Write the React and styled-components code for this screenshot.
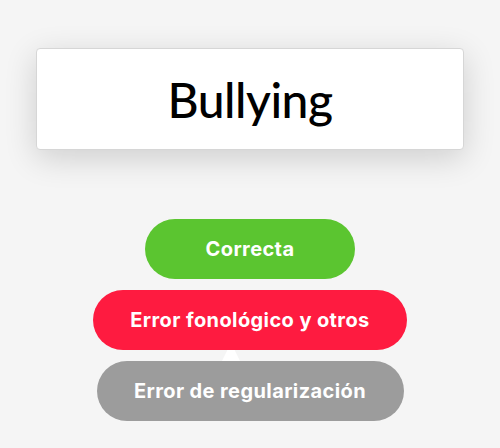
import React from "react";
import styled, { createGlobalStyle } from "styled-components";

const GlobalStyle = createGlobalStyle`
  html, body {
    margin: 0;
    padding: 0;
    background: #f5f5f5;
  }
`;

const options = [
  { label: "Correcta", color: "#5bc530", width: 210 },
  { label: "Error fonológico y otros", color: "#fe1b40", width: 314 },
  { label: "Error de regularización", color: "#9c9c9c", width: 307 },
];

export default function App() {
  return (
    <>
      <GlobalStyle />
      <Page>
        <WordCard>
          <Word>Bullying</Word>
        </WordCard>
        <OptionsList>
          {options.map((item, i) => (
            <OptionRow key={item.label}>
              <OptionButton color={item.color} width={item.width}>
                {item.label}
              </OptionButton>
              {i === 1 && <Pointer />}
            </OptionRow>
          ))}
        </OptionsList>
      </Page>
    </>
  );
}

const Page = styled.div`
  width: 500px;
  height: 448px;
  box-sizing: border-box;
  padding: 48px 36px 0;
  display: flex;
  flex-direction: column;
  align-items: center;
  overflow: hidden;
`;

const WordCard = styled.div`
  width: 100%;
  height: 102px;
  box-sizing: border-box;
  background: #ffffff;
  border: 1px solid #d6d6d6;
  border-radius: 4px;
  box-shadow: 0 8px 32px rgba(0, 0, 0, 0.16);
  display: flex;
  align-items: center;
  justify-content: center;
`;

const Word = styled.h1`
  margin: 0;
  font-family: Lato, "Liberation Sans", sans-serif;
  font-weight: 500;
  font-size: 48px;
  color: #000;
  letter-spacing: -0.5px;
`;

const OptionsList = styled.div`
  margin-top: 69px;
  display: flex;
  flex-direction: column;
  align-items: center;
  gap: 11px;
`;

const OptionRow = styled.div`
  position: relative;
  display: flex;
  justify-content: center;
`;

const OptionButton = styled.button`
  width: ${(p) => p.width}px;
  height: 60px;
  border: none;
  border-radius: 30px;
  background: ${(p) => p.color};
  color: #ffffff;
  font-family: Inter, "Liberation Sans", sans-serif;
  font-weight: 700;
  font-size: 20px;
  letter-spacing: 0.4px;
  cursor: pointer;
`;

const Pointer = styled.div`
  position: absolute;
  left: 129px;
  bottom: -11px;
  width: 18px;
  height: 11px;
  background: #ffffff;
  clip-path: polygon(30% 0, 70% 0, 100% 100%, 0 100%);
`;
